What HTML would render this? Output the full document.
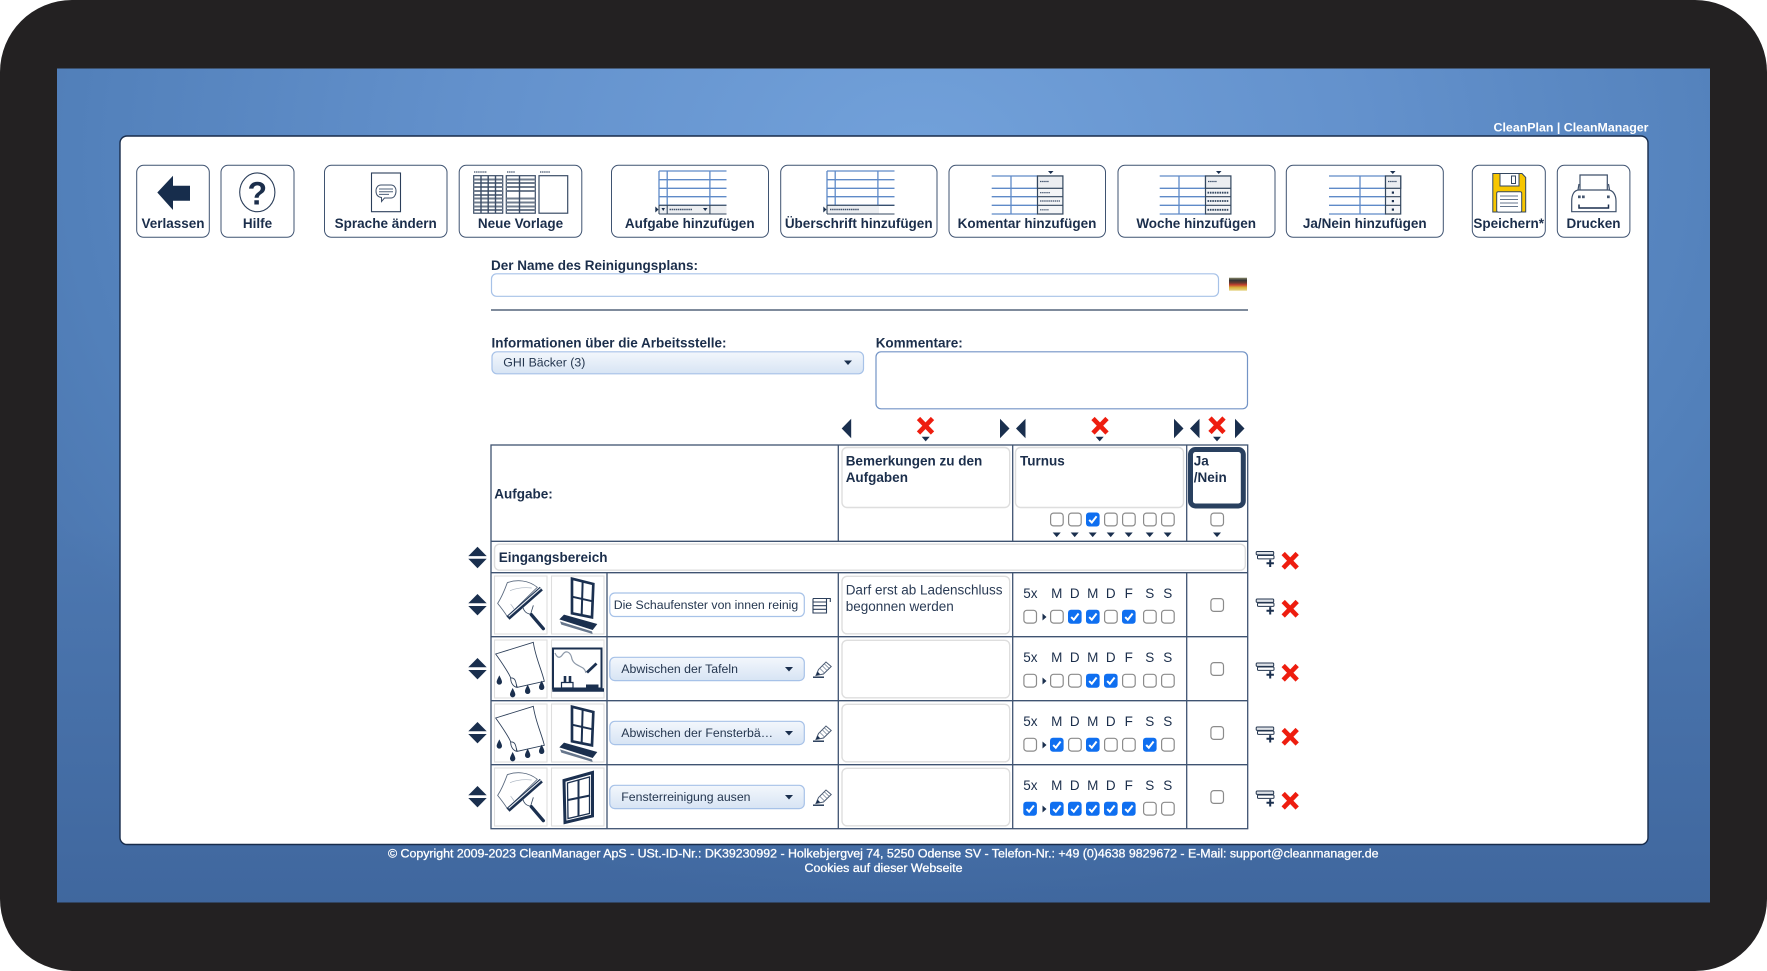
<!DOCTYPE html>
<html lang="de"><head><meta charset="utf-8"><title>CleanPlan | CleanManager</title>
<style>
html,body{margin:0;padding:0;background:#fff;width:1767px;height:971px;overflow:hidden}
svg{display:block;position:absolute;left:0;top:0}
text{font-family:"Liberation Sans",Arial,sans-serif;fill:#1b2e4b;font-size:13.5px}
.b{font-weight:700}
.f{font-size:12.4px;fill:#fff;stroke:#fff;stroke-width:.3}
.s{font-size:12.3px;fill:#24364f}
.m{text-anchor:middle}
.l{stroke:#3f5371;stroke-width:1.3;fill:none}
.bx{fill:#fff;stroke:#dedede;stroke-width:1.4}
.btn{fill:#fff;stroke:#3f5371;stroke-width:1}
.gl{stroke:#5f8ac8;stroke-width:1.3;fill:none}
.dk{fill:#1a2f4e}
</style></head><body>
<svg width="1767" height="971" viewBox="0 0 1767 971" xmlns="http://www.w3.org/2000/svg">
<defs>
<radialGradient id="bg" gradientUnits="userSpaceOnUse" cx="920" cy="130" r="1000" gradientTransform="translate(0 60) scale(1 .75)">
<stop offset="0" stop-color="#72a1da"/><stop offset=".45" stop-color="#6391cc"/><stop offset=".85" stop-color="#5280ba"/><stop offset="1" stop-color="#4d78b1"/></radialGradient>
<linearGradient id="bd" x1="0" y1="0" x2="0" y2="1"><stop offset=".55" stop-color="#1e3c6e" stop-opacity="0"/><stop offset="1" stop-color="#1e3c6e" stop-opacity=".28"/></linearGradient>
<linearGradient id="sel" x1="0" y1="0" x2="0" y2="1"><stop offset="0" stop-color="#f3f7fc"/><stop offset="1" stop-color="#d7e4f4"/></linearGradient>
<linearGradient id="flag" x1="0" y1="0" x2="0" y2="1"><stop offset="0" stop-color="#8a8a6a"/><stop offset=".2" stop-color="#333"/><stop offset=".4" stop-color="#6b3a30"/><stop offset=".55" stop-color="#c5402f"/><stop offset=".75" stop-color="#d8b13c"/><stop offset="1" stop-color="#e6d68a"/></linearGradient>
<g id="c"><rect x=".6" y=".6" width="12.6" height="12.8" rx="3" fill="#fff" stroke="#8b8b8b" stroke-width="1.2"/></g>
<g id="k"><rect x="0" y="0" width="13.6" height="14" rx="3" fill="#0f6ff0"/><path d="M3.2 7.4 L5.8 10 L10.6 3.8" fill="none" stroke="#fff" stroke-width="2"/></g>
<path id="dn" d="M-4 0H4L0 4.6Z" class="dk"/>
<path id="lt" d="M0 9.7L9.5 0V19.4Z" class="dk"/>
<path id="rt" d="M9.5 9.7L0 0V19.4Z" class="dk"/>
<g id="x"><path d="M1.5 1.5L15.5 16M15.5 1.5L1.5 16" stroke="#ee1d0f" stroke-width="4.6" fill="none"/></g>
<g id="ud"><path d="M0 9.3L9.2 0L18.4 9.3Z" class="dk"/><path d="M0 12L18.4 12L9.2 21.4Z" class="dk"/></g>
<g id="add"><rect x=".5" y=".5" width="17.5" height="3.4" rx="1" fill="#dfe3e8" stroke="#24364f" stroke-width="1"/><rect x="1.8" y="4.5" width="16.5" height="3.4" rx="1" fill="#fff" stroke="#24364f" stroke-width="1"/><path d="M14.5 8.6V16M10.8 12.3H18.2" stroke="#1a2f4e" stroke-width="2"/></g>
<g id="pen"><path d="M0 16.2H11" stroke="#1a2f4e" stroke-width="1.4"/><path d="M3 14.5L5.5 8.5L13 1L18.2 5.5L10.5 13Z" fill="#fff" stroke="#4a5a72" stroke-width="1"/><path d="M3 14.5L4.6 10.6L7.2 13.2Z" class="dk"/><path d="M7 7.5L11.5 12M9.5 5L14 9.5M11.5 3L16 7.3" stroke="#6a7a90" stroke-width=".7"/></g>
<g id="sq" transform="scale(.3333)"><path d="M52 26C80 16 115 18 142 40L52 128C42 112 32 100 23 88C35 70 45 45 52 26Z" fill="#fff" stroke="#5a697e" stroke-width="2.6"/><path d="M60 50C85 40 105 40 125 42M62 90C65 95 70 100 72 105" stroke="#a8b2bf" stroke-width="2" fill="none"/><path d="M154 44L54 132" stroke="#1b3050" stroke-width="14"/><path d="M152 43L56 127" stroke="#e6ebf1" stroke-width="3.5"/><path d="M98 98C102 112 108 118 122 121C124 112 126 108 130 94" fill="none" stroke="#33465f" stroke-width="2.5"/><path d="M124 122L160 164" stroke="#1b3050" stroke-width="10" stroke-linecap="round"/></g>
<g id="wn" transform="scale(.3333)"><path d="M246 14L310 30L306 130L246 118Z" fill="#fff" stroke="#1b3050" stroke-width="8"/><path d="M278 22L275 124M246 68L308 82" stroke="#1b3050" stroke-width="6"/><path d="M208 136L222 122L322 150L308 168Z" class="dk"/><path d="M210 142L306 172L308 180L214 152Z" fill="#66768c"/></g>
<g id="wc" transform="scale(.3333)"><path d="M17 48L130 13C136 58 155 95 163 130L82 148C78 135 70 122 62 120C60 112 40 80 17 48Z" fill="#fff" stroke="#2d3f59" stroke-width="2.6"/><path d="M62 120C72 118 78 125 80 148C70 146 62 135 62 120Z" fill="#fff" stroke="#2d3f59" stroke-width="2.6"/><path d="M28 112C33 122 36 127 36 132A8 8 0 0 1 20 132C20 127 23 122 28 112Z" class="dk"/><path d="M68 150C73 160 76 165 76 170A8 8 0 0 1 60 170C60 165 63 160 68 150Z" class="dk"/><path d="M113 140C118 150 121 155 121 160A8 8 0 0 1 105 160C105 155 108 150 113 140Z" class="dk"/><path d="M155 128C160 138 163 143 163 148A8 8 0 0 1 147 148C147 143 150 138 155 128Z" class="dk"/></g>
<g id="tbl"><path d="M0 0H67.5M0 8.7H67.5M0 17.3H67.5M0 25.7H67.5M0 34.3H67.5M0 0V34.3M8.2 0V34.3M50.9 0V34.3" class="gl"/></g>
<g id="tb2"><path d="M0 0H46M0 12.3H46M0 20.7H46M0 29.3H46M0 38H46M19.3 0V38" class="gl"/></g>
</defs>

<rect width="1767" height="971" rx="72" fill="#232122"/>
<rect x="57" y="68.5" width="1653" height="834" fill="url(#bg)"/>
<rect x="57" y="68.5" width="1653" height="834" fill="url(#bd)"/>

<text x="1648.5" y="131.5" class="b" text-anchor="end" style="font-size:12.4px;fill:#fff">CleanPlan | CleanManager</text>
<rect x="120" y="136" width="1528" height="708.5" rx="7" fill="#fff" stroke="#182c4b" stroke-width="1.4"/>

<!-- toolbar -->
<rect class="btn" x="136.7" y="165.3" width="72.6" height="72" rx="7"/>
<rect class="btn" x="221" y="165.3" width="73" height="72" rx="7"/>
<rect class="btn" x="324.5" y="165.3" width="122.5" height="72" rx="7"/>
<rect class="btn" x="459.2" y="165.3" width="122.6" height="72" rx="7"/>
<rect class="btn" x="611.5" y="165.3" width="157" height="72" rx="7"/>
<rect class="btn" x="780.7" y="165.3" width="156.3" height="72" rx="7"/>
<rect class="btn" x="949" y="165.3" width="156.5" height="72" rx="7"/>
<rect class="btn" x="1118" y="165.3" width="157" height="72" rx="7"/>
<rect class="btn" x="1286.3" y="165.3" width="157" height="72" rx="7"/>
<rect class="btn" x="1472.3" y="165.3" width="73" height="72" rx="7"/>
<rect class="btn" x="1557.3" y="165.3" width="72.6" height="72" rx="7"/>

<g class="b" text-anchor="middle">
<text x="173" y="228">Verlassen</text>
<text x="257.5" y="228">Hilfe</text>
<text x="385.7" y="228">Sprache ändern</text>
<text x="520.5" y="228">Neue Vorlage</text>
<text x="689.7" y="228">Aufgabe hinzufügen</text>
<text x="858.7" y="228">Überschrift hinzufügen</text>
<text x="1027" y="228">Komentar hinzufügen</text>
<text x="1196.2" y="228">Woche hinzufügen</text>
<text x="1364.7" y="228">Ja/Nein hinzufügen</text>
<text x="1508.7" y="228">Speichern*</text>
<text x="1593.5" y="228">Drucken</text>
</g>

<path d="M157.3 192.5L173 175.7V185.7H190V200.7H173V210Z" fill="#172d4c"/>
<ellipse cx="257.3" cy="192.3" rx="17.6" ry="19.4" fill="#fff" stroke="#2b3e5a" stroke-width="1.1"/>
<text x="257.3" y="204.5" class="b m" style="font-size:32px">?</text>

<rect x="371.5" y="173" width="29" height="38.7" fill="#fff" stroke="#2b3e5a" stroke-width="1.1"/>
<path d="M381 185H391C394 185 396 187.5 396 191C396 195 394 198 391 198H384.5L381.5 201.5V197.5C378 197 376 195 376 191C376 187.5 378 185 381 185Z" fill="#fff" stroke="#3d4f69" stroke-width="1"/>
<path d="M379 189H393M379 191.7H393M379 194.4H389" stroke="#4f6079" stroke-width="1"/>

<!-- Neue Vorlage icon -->
<g fill="none" stroke="#3a4c66">
<path d="M474 172H487M507 172H515M540 172H550" stroke-width="1.2" stroke-dasharray="1.4 .7"/>
<rect x="473.7" y="175.7" width="29" height="37.5" fill="#fff" stroke-width="1.2"/>
<path d="M473.7 179.5H502.7M473.7 183H502.7M473.7 187H502.7M473.7 191H502.7M473.7 195H502.7M473.7 198.5H502.7M473.7 202.5H502.7M473.7 206.5H502.7M473.7 210H502.7" stroke-width="2.1" stroke="#6f7c8e"/>
<path d="M481 175.7V213M488.2 175.7V213M495.5 175.7V213" stroke-width="1.4"/>
<rect x="506.3" y="175.7" width="29" height="37.5" fill="#fff" stroke-width="1.2"/>
<path d="M506.3 179.5H535.3M506.3 183H535.3M506.3 187H535.3M506.3 191H535.3M506.3 198.5H535.3M506.3 202.5H535.3M506.3 206.5H535.3M506.3 210H535.3" stroke-width="2.1" stroke="#6f7c8e"/>
<path d="M519.5 175.7V213" stroke-width="1.4"/>
<rect x="539" y="175.7" width="28.7" height="37.5" fill="#fff" stroke-width="1.2"/>
</g>

<!-- add task icons -->
<use href="#tbl" x="659" y="171"/>
<rect x="659" y="205.3" width="67.5" height="8.7" fill="#eceef1"/>
<path d="M659 205.3H726.5M659 214H726.5M659 205.3V214M667.2 205.3V214M709.9 205.3V214" stroke="#33475f" stroke-width="1.1" fill="none"/>
<path d="M655.3 206.5L658.5 209.5L655.3 212.5Z" class="dk"/><path d="M661.5 208H665L663.2 211Z" class="dk"/>
<path d="M669.5 209.5H692" stroke="#40526c" stroke-width="1.5" stroke-dasharray="1.5 .6"/><path d="M703 208H707.5L705.2 211Z" class="dk"/>
<use href="#tbl" x="827" y="171"/>
<rect x="827" y="205.3" width="52" height="8.7" fill="#eceef1"/>
<path d="M827 205.3H894.5M827 214H894.5M827 205.3V214" stroke="#33475f" stroke-width="1.1" fill="none"/>
<path d="M823.3 206.5L826.5 209.5L823.3 212.5Z" class="dk"/>
<path d="M830 209.5H859" stroke="#40526c" stroke-width="1.5" stroke-dasharray="1.5 .6"/>

<use href="#tb2" x="991.7" y="176"/>
<rect x="1037.5" y="176" width="25.4" height="38" fill="#f4f5f7" stroke="#33475f" stroke-width="1.2"/>
<rect x="1037.5" y="176" width="25.4" height="12.3" fill="#eceef1" stroke="#33475f" stroke-width="1.2"/>
<path d="M1037.5 196.7H1063M1037.5 205.3H1063" stroke="#33475f" stroke-width="1.2"/>
<path d="M1040 181.5H1049M1040 192.7H1050M1040 201H1060M1040 209.8H1049" stroke="#40526c" stroke-width="1.2" stroke-dasharray="1.5 .6"/>
<path d="M1048 171H1053.5L1050.7 174Z" class="dk"/>

<use href="#tb2" x="1159.7" y="176"/>
<rect x="1205.5" y="176" width="25.4" height="38" fill="#f4f5f7" stroke="#33475f" stroke-width="1.2"/>
<rect x="1205.5" y="176" width="25.4" height="12.3" fill="#eceef1" stroke="#33475f" stroke-width="1.2"/>
<path d="M1205.5 196.7H1231M1205.5 205.3H1231" stroke="#33475f" stroke-width="1.2"/>
<path d="M1208 181.5H1217" stroke="#40526c" stroke-width="1.2" stroke-dasharray="1.5 .6"/>
<path d="M1207.5 192.7H1229M1207.5 201H1229M1207.5 209.8H1229" stroke="#33475f" stroke-width="1.8" stroke-dasharray="1.6 .8"/>
<path d="M1216 171H1221.5L1218.7 174Z" class="dk"/>

<path d="M1329 176H1385.5M1329 188.3H1385.5M1329 196.7H1385.5M1329 205.3H1385.5M1329 214H1385.5M1360 176V214" class="gl"/>
<rect x="1385.5" y="176" width="15.2" height="38" fill="#f4f5f7" stroke="#33475f" stroke-width="1.2"/>
<rect x="1385.5" y="176" width="15.2" height="12.3" fill="#eceef1" stroke="#33475f" stroke-width="1.2"/>
<path d="M1385.5 196.7H1400.7M1385.5 205.3H1400.7" stroke="#33475f" stroke-width="1.2"/>
<path d="M1388 181.5H1397" stroke="#40526c" stroke-width="1.2" stroke-dasharray="1.5 .6"/>
<rect x="1391.8" y="191.5" width="2.2" height="2.2" class="dk"/><rect x="1391.8" y="200" width="2.2" height="2.2" class="dk"/><rect x="1391.8" y="208.5" width="2.2" height="2.2" class="dk"/>
<path d="M1390 171H1395.5L1392.8 174Z" class="dk"/>

<!-- floppy -->
<path d="M1492.8 173.5H1522L1525.7 177.5V212H1492.8Z" fill="#f7c600" stroke="#33475f" stroke-width="1"/>
<rect x="1500" y="173.5" width="19" height="12.5" fill="#fff" stroke="#33475f" stroke-width="1"/>
<rect x="1511.5" y="176" width="4" height="7.5" fill="#fff" stroke="#33475f" stroke-width="1"/>
<rect x="1496.7" y="191.7" width="25" height="20.4" rx="1.5" fill="#fff" stroke="#33475f" stroke-width="1"/>
<path d="M1500 196H1518M1500 199.5H1518M1500 203H1518M1500 206.5H1518" stroke="#66768c" stroke-width="1.1"/>
<!-- printer -->
<path d="M1580 190V175H1607.3V190" fill="#fff" stroke="#3d4f69" stroke-width="1.2"/>
<path d="M1578 190L1579 184M1609.5 190L1608.5 184" stroke="#3d4f69" stroke-width="1.2"/>
<path d="M1579 190H1608C1613 190 1616 195 1616 201V211.7H1571.7V201C1571.7 195 1574 190 1579 190Z" fill="#fff" stroke="#3d4f69" stroke-width="1.2"/>
<path d="M1579 204.5V208H1608.5V204.5" fill="none" stroke="#1a2f4e" stroke-width="1.5"/>
<rect x="1578" y="195.5" width="2.7" height="2.7" fill="#44566f"/><rect x="1582" y="195.5" width="2.7" height="2.7" fill="#44566f"/><rect x="1607" y="195.5" width="2.7" height="2.7" fill="#44566f"/>

<!-- form -->
<text x="491" y="270" class="b">Der Name des Reinigungsplans:</text>
<rect x="491.5" y="273.8" width="727" height="22.5" rx="5" fill="#fff" stroke="#a7c2e8" stroke-width="1.2"/>
<rect x="1229" y="277.7" width="18" height="13" fill="url(#flag)"/>
<path d="M491 310H1248" stroke="#55657c" stroke-width="1.5"/>
<text x="491.5" y="347.5" class="b">Informationen über die Arbeitsstelle:</text>
<text x="875.7" y="347.5" class="b">Kommentare:</text>
<rect x="492" y="351.8" width="371.5" height="22" rx="5" fill="url(#sel)" stroke="#a7c2e8" stroke-width="1.2"/>
<text x="503.3" y="366.5" class="s">GHI Bäcker (3)</text>
<path d="M844 360.5H852L848 365Z" class="dk"/>
<rect x="876" y="351.8" width="371.5" height="57" rx="5" fill="#fff" stroke="#7394c6" stroke-width="1.2"/>

<!-- column controls -->
<use href="#lt" x="841.7" y="418.8"/><use href="#rt" x="1000" y="418.8"/>
<use href="#lt" x="1016" y="418.8"/><use href="#rt" x="1174" y="418.8"/>
<use href="#lt" x="1190" y="418.8"/><use href="#rt" x="1235" y="418.8"/>
<use href="#x" x="917" y="417"/><use href="#x" x="1091.5" y="417"/><use href="#x" x="1208.5" y="416.5"/>
<use href="#dn" x="925.7" y="436.8"/><use href="#dn" x="1099.7" y="436.8"/><use href="#dn" x="1217" y="436.8"/>

<!-- table -->
<rect class="l" x="491" y="445" width="756.7" height="383.7"/>
<path class="l" d="M491 541.3H1247.7M491 572.7H1247.7M491 636.7H1247.7M491 700.7H1247.7M491 764.7H1247.7M838.3 445V541.3M1012.7 445V541.3M1186.7 445V541.3M838.3 572.7V828.7M1012.7 572.7V828.7M1186.7 572.7V828.7M607 572.7V828.7"/>
<text x="494.3" y="498.5" class="b">Aufgabe:</text>

<rect class="bx" x="842" y="447.5" width="167.7" height="60" rx="5"/>
<text x="845.7" y="465.5" class="b">Bemerkungen zu den</text><text x="845.7" y="482" class="b">Aufgaben</text>
<rect class="bx" x="1015.5" y="447.5" width="168" height="60" rx="5"/>
<text x="1020" y="465.5" class="b">Turnus</text>
<rect x="1190.5" y="449.5" width="52.8" height="56.5" rx="5" fill="#fff" stroke="#29405f" stroke-width="5"/>
<text x="1193.7" y="465.5" class="b">Ja</text><text x="1193.7" y="482" class="b">/Nein</text>

<use href="#c" x="1050" y="512.5"/><use href="#c" x="1068" y="512.5"/><use href="#k" x="1086" y="512.5"/><use href="#c" x="1104" y="512.5"/><use href="#c" x="1122" y="512.5"/><use href="#c" x="1143" y="512.5"/><use href="#c" x="1161" y="512.5"/><use href="#c" x="1210.3" y="512.5"/>
<use href="#dn" x="1056.7" y="532.5"/><use href="#dn" x="1074.7" y="532.5"/><use href="#dn" x="1092.7" y="532.5"/><use href="#dn" x="1110.7" y="532.5"/><use href="#dn" x="1128.7" y="532.5"/><use href="#dn" x="1149.7" y="532.5"/><use href="#dn" x="1167.7" y="532.5"/><use href="#dn" x="1217" y="532.5"/>

<rect class="bx" x="494.5" y="544.2" width="750.8" height="26" rx="5"/>
<text x="498.7" y="562" class="b">Eingangsbereich</text>
<use href="#ud" x="468.3" y="546.8"/><use href="#add" x="1255.7" y="551"/><use href="#x" x="1281.7" y="552"/>

<!-- rows: image cells -->
<g class="bx" style="stroke-width:1.1">
<rect x="494.5" y="576" width="52.5" height="58"/><rect x="551.5" y="576" width="52.5" height="58"/>
<rect x="494.5" y="640" width="52.5" height="58"/><rect x="551.5" y="640" width="52.5" height="58"/>
<rect x="494.5" y="704" width="52.5" height="58"/><rect x="551.5" y="704" width="52.5" height="58"/>
<rect x="494.5" y="768" width="52.5" height="58"/><rect x="551.5" y="768" width="52.5" height="58"/>
</g>
<use href="#sq" x="490" y="574"/><use href="#wn" x="490" y="574"/>
<use href="#wc" x="490" y="638"/>
<use href="#wc" x="490" y="702"/><use href="#wn" x="490" y="702"/>
<use href="#sq" x="490" y="766"/>
<!-- board -->
<rect x="553" y="648.5" width="48.5" height="40" fill="#fff" stroke="#1b3050" stroke-width="2"/>
<path d="M552.3 690H604" stroke="#1b3050" stroke-width="3.6"/>
<path d="M555 653C558 660 561 657 563 654C566 650 570 652 571.5 657C572.5 664 578 665 583 668C585 669.5 585.5 671 586 673" fill="none" stroke="#8d99a9" stroke-width="1.2"/>
<path d="M587 672.5L596.5 663.5" stroke="#1b3050" stroke-width="2.8"/>
<path d="M561.5 688V682.5H573V688Z" fill="#fff" stroke="#1b3050" stroke-width="1.2"/>
<path d="M565 683V676M570 683V676" stroke="#1b3050" stroke-width="2.6"/>
<rect x="586" y="684.5" width="12.5" height="4" class="dk"/>
<!-- window row 4 -->
<path d="M564 780.5L592.5 772.5V816L565 822.5Z" fill="#fff" stroke="#1b3050" stroke-width="3"/>
<path d="M567.5 783L589.5 777V813.5L568 818.5Z" fill="none" stroke="#1b3050" stroke-width="1.3"/>
<path d="M578.5 780V816M568 800L590 795.5" stroke="#1b3050" stroke-width="2"/>

<!-- row inputs -->
<rect x="609.8" y="593" width="194.5" height="23.5" rx="5" fill="#fff" stroke="#a7c2e8" stroke-width="1.2"/>
<text x="613.7" y="609" class="s">Die Schaufenster von innen reinig</text>
<g fill="url(#sel)" stroke="#a7c2e8" stroke-width="1.2">
<rect x="609.8" y="657.3" width="194.5" height="23.3" rx="5"/>
<rect x="609.8" y="721.3" width="194.5" height="23.3" rx="5"/>
<rect x="609.8" y="785.3" width="194.5" height="23.3" rx="5"/>
</g>
<text x="621.3" y="673" class="s">Abwischen der Tafeln</text>
<text x="621.3" y="737" class="s">Abwischen der Fensterbä…</text>
<text x="621.3" y="801" class="s">Fensterreinigung ausen</text>
<path d="M785 667H793L789 671.5Z" class="dk"/><path d="M785 731H793L789 735.5Z" class="dk"/><path d="M785 795H793L789 799.5Z" class="dk"/>

<path d="M813 598.5H830.3V602M813 598.5V613H826.5V598.5M813 602H826.5M813 605.7H826.5M813 609.3H826.5" fill="none" stroke="#2c3f5b" stroke-width="1.1"/>
<use href="#pen" x="813" y="661"/><use href="#pen" x="813" y="725"/><use href="#pen" x="813" y="789"/>

<!-- remarks -->
<rect class="bx" x="842" y="576.3" width="167.7" height="57.5" rx="5"/>
<rect class="bx" x="842" y="640.3" width="167.7" height="57.5" rx="5"/>
<rect class="bx" x="842" y="704.3" width="167.7" height="57.5" rx="5"/>
<rect class="bx" x="842" y="768.3" width="167.7" height="57.5" rx="5"/>
<text x="845.7" y="594.5" style="fill:#2a3b55">Darf erst ab Ladenschluss</text>
<text x="845.7" y="611" style="fill:#2a3b55">begonnen werden</text>

<!-- turnus labels -->
<g>
<text x="1023.3" y="598">5x</text><g class="m"><text x="1056.7" y="598">M</text><text x="1074.7" y="598">D</text><text x="1092.7" y="598">M</text><text x="1110.7" y="598">D</text><text x="1128.7" y="598">F</text><text x="1149.7" y="598">S</text><text x="1167.7" y="598">S</text></g>
<text x="1023.3" y="662">5x</text><g class="m"><text x="1056.7" y="662">M</text><text x="1074.7" y="662">D</text><text x="1092.7" y="662">M</text><text x="1110.7" y="662">D</text><text x="1128.7" y="662">F</text><text x="1149.7" y="662">S</text><text x="1167.7" y="662">S</text></g>
<text x="1023.3" y="726">5x</text><g class="m"><text x="1056.7" y="726">M</text><text x="1074.7" y="726">D</text><text x="1092.7" y="726">M</text><text x="1110.7" y="726">D</text><text x="1128.7" y="726">F</text><text x="1149.7" y="726">S</text><text x="1167.7" y="726">S</text></g>
<text x="1023.3" y="790">5x</text><g class="m"><text x="1056.7" y="790">M</text><text x="1074.7" y="790">D</text><text x="1092.7" y="790">M</text><text x="1110.7" y="790">D</text><text x="1128.7" y="790">F</text><text x="1149.7" y="790">S</text><text x="1167.7" y="790">S</text></g>
</g>

<!-- checks row 1 -->
<use href="#c" x="1023.3" y="609.7"/><use href="#c" x="1050" y="609.7"/><use href="#k" x="1068" y="609.7"/><use href="#k" x="1086" y="609.7"/><use href="#c" x="1104" y="609.7"/><use href="#k" x="1122" y="609.7"/><use href="#c" x="1143" y="609.7"/><use href="#c" x="1161" y="609.7"/>
<!-- row 2 -->
<use href="#c" x="1023.3" y="673.7"/><use href="#c" x="1050" y="673.7"/><use href="#c" x="1068" y="673.7"/><use href="#k" x="1086" y="673.7"/><use href="#k" x="1104" y="673.7"/><use href="#c" x="1122" y="673.7"/><use href="#c" x="1143" y="673.7"/><use href="#c" x="1161" y="673.7"/>
<!-- row 3 -->
<use href="#c" x="1023.3" y="737.7"/><use href="#k" x="1050" y="737.7"/><use href="#c" x="1068" y="737.7"/><use href="#k" x="1086" y="737.7"/><use href="#c" x="1104" y="737.7"/><use href="#c" x="1122" y="737.7"/><use href="#k" x="1143" y="737.7"/><use href="#c" x="1161" y="737.7"/>
<!-- row 4 -->
<use href="#k" x="1023.3" y="801.7"/><use href="#k" x="1050" y="801.7"/><use href="#k" x="1068" y="801.7"/><use href="#k" x="1086" y="801.7"/><use href="#k" x="1104" y="801.7"/><use href="#k" x="1122" y="801.7"/><use href="#c" x="1143" y="801.7"/><use href="#c" x="1161" y="801.7"/>
<path d="M1042.5 613.5L1046.5 617L1042.5 620.5Z" class="dk"/><path d="M1042.5 677.5L1046.5 681L1042.5 684.5Z" class="dk"/><path d="M1042.5 741.5L1046.5 745L1042.5 748.5Z" class="dk"/><path d="M1042.5 805.5L1046.5 809L1042.5 812.5Z" class="dk"/>

<use href="#c" x="1210.3" y="598"/><use href="#c" x="1210.3" y="662"/><use href="#c" x="1210.3" y="726"/><use href="#c" x="1210.3" y="790"/>

<use href="#ud" x="468.3" y="594"/><use href="#ud" x="468.3" y="658"/><use href="#ud" x="468.3" y="722"/><use href="#ud" x="468.3" y="786"/>
<use href="#add" x="1255.7" y="598.5"/><use href="#add" x="1255.7" y="662.5"/><use href="#add" x="1255.7" y="726.5"/><use href="#add" x="1255.7" y="790.5"/>
<use href="#x" x="1281.7" y="600"/><use href="#x" x="1281.7" y="664"/><use href="#x" x="1281.7" y="728"/><use href="#x" x="1281.7" y="792"/>

<!-- footer -->
<text class="f" x="388" y="857.7" textLength="990.5" lengthAdjust="spacing">© Copyright 2009-2023 CleanManager ApS - USt.-ID-Nr.: DK39230992 - Holkebjergvej 74, 5250 Odense SV - Telefon-Nr.: +49 (0)4638 9829672 - E-Mail: support@cleanmanager.de</text>
<text class="f" x="804.5" y="872" textLength="158" lengthAdjust="spacing">Cookies auf dieser Webseite</text>
</svg>
</body></html>
